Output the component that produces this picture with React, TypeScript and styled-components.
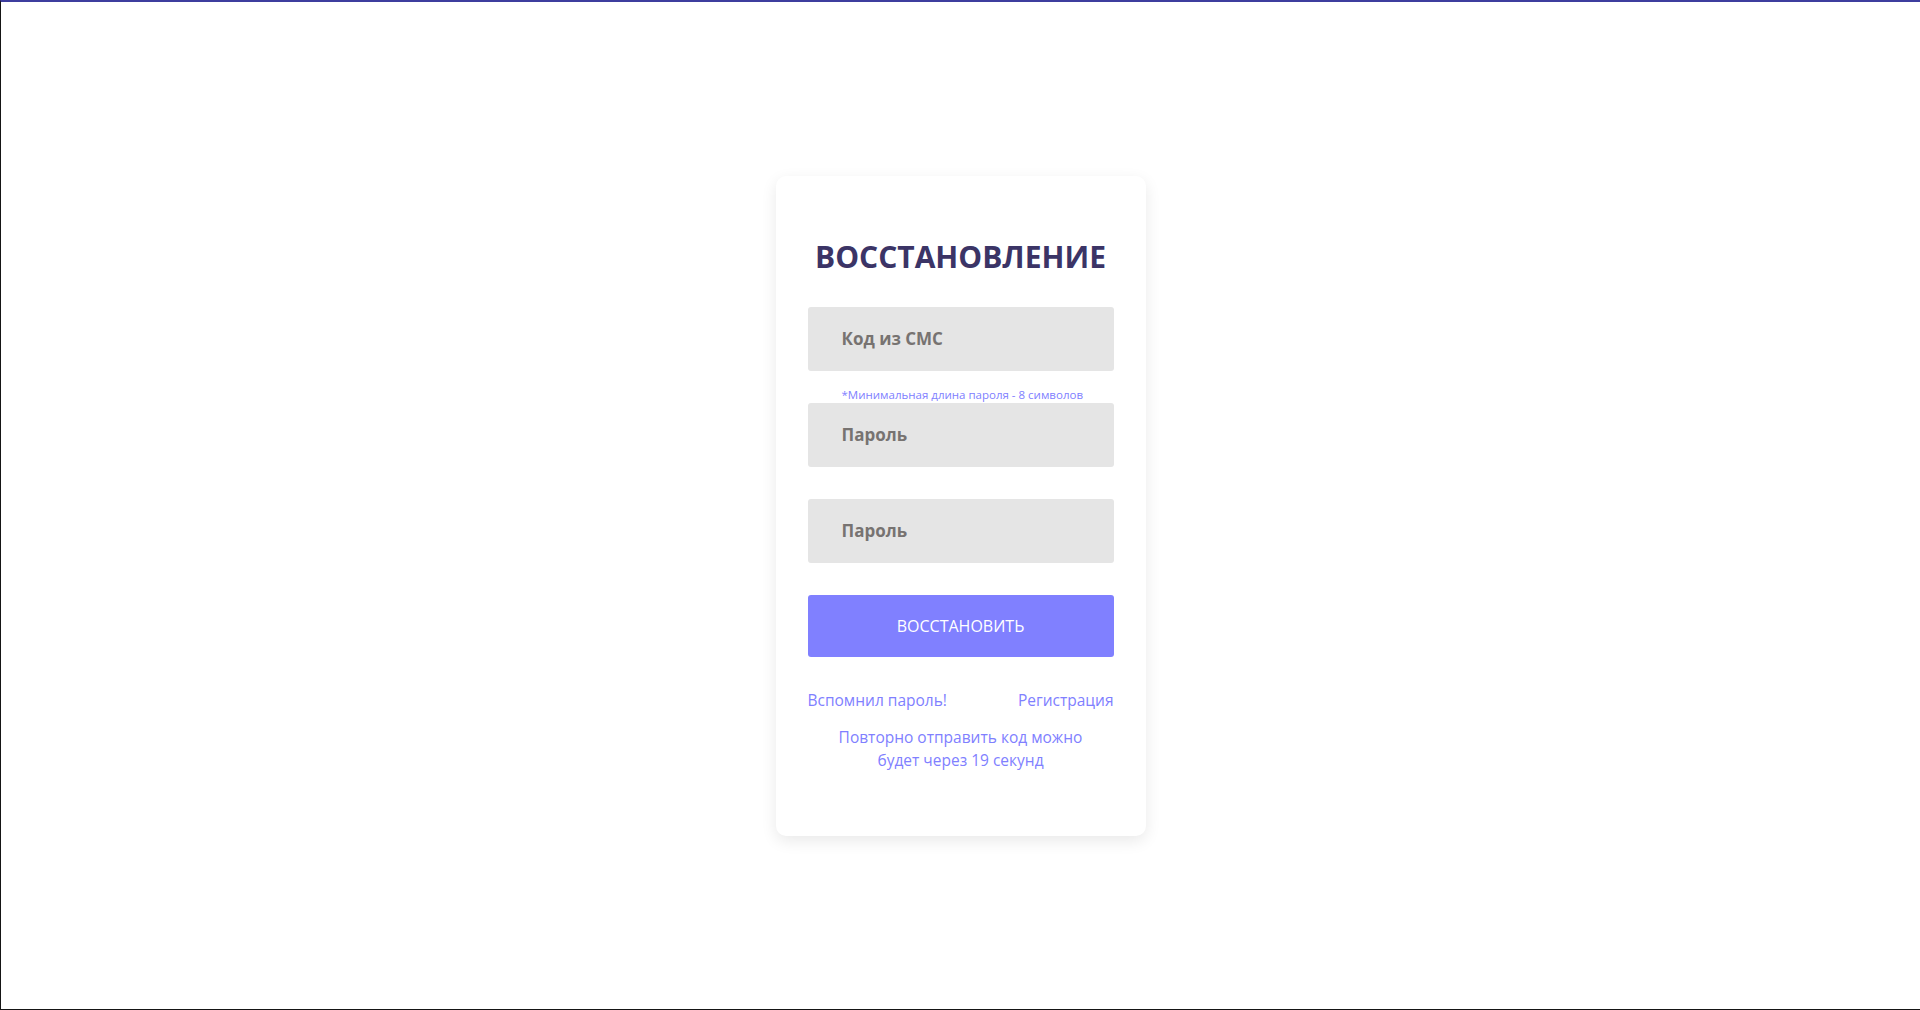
import React from "react";
import styled, { createGlobalStyle } from "styled-components";

const GlobalStyle = createGlobalStyle`
  *, *::before, *::after { box-sizing: border-box; }
  html, body { margin: 0; padding: 0; height: 100%; background: #ffffff; }
  body { font-family: "Open Sans", "Noto Sans", sans-serif; }
  #root { height: 100%; }
`;

const Page = styled.div`
  height: 100vh;
  display: flex;
  align-items: center;
  justify-content: center;
  border-top: 2px solid #3d3d9e;
  border-left: 1px solid #151515;
  border-bottom: 1px solid #151515;
  background: #ffffff;
`;

const Card = styled.div`
  width: 370px;
  padding: 63px 32px 64px;
  background: #ffffff;
  border-radius: 10px;
  box-shadow: 0 5px 16px rgba(0, 0, 0, 0.09);
  display: flex;
  flex-direction: column;
`;

const Title = styled.h1`
  margin: 0 0 32px;
  font-size: 30px;
  line-height: 36px;
  font-weight: 700;
  color: #3b3466;
  text-align: center;
`;

const Field = styled.input<{ $gap?: number }>`
  display: block;
  width: 100%;
  height: 64px;
  margin: ${(p) => p.$gap ?? 32}px 0 0;
  padding: 0 34px;
  border: none;
  border-radius: 3px;
  background: #e5e5e5;
  font-family: inherit;
  font-size: 17px;
  font-weight: 700;
  color: #777371;
  outline: none;
  &::placeholder { color: #777371; opacity: 1; }
`;

const Hint = styled.div`
  margin: 17px 0 1px;
  padding-left: 34px;
  font-size: 11.5px;
  line-height: 14px;
  color: #8080ff;
  white-space: nowrap;
`;

const SubmitButton = styled.button`
  margin-top: 32px;
  height: 62px;
  width: 100%;
  border: none;
  border-radius: 3px;
  background: #8080ff;
  color: #ffffff;
  font-family: inherit;
  font-size: 16px;
  font-weight: 500;
  cursor: pointer;
`;

const LinksRow = styled.div`
  margin-top: 33px;
  display: flex;
  justify-content: space-between;
  font-size: 15.5px;
  line-height: 20px;
`;

const TextLink = styled.a`
  color: #8080ff;
  text-decoration: none;
  cursor: pointer;
`;

const Retry = styled.p`
  margin: 16px 0 0;
  text-align: center;
  font-size: 15.5px;
  line-height: 23px;
  color: #8080ff;
`;

export default function App() {
  return (
    <>
      <GlobalStyle />
      <Page>
        <Card>
          <Title>ВОССТАНОВЛЕНИЕ</Title>
          <Field placeholder="Код из СМС" $gap={0} />
          <Hint>*Минимальная длина пароля - 8 символов</Hint>
          <Field placeholder="Пароль" type="password" $gap={0} />
          <Field placeholder="Пароль" type="password" />
          <SubmitButton>ВОССТАНОВИТЬ</SubmitButton>
          <LinksRow>
            <TextLink>Вспомнил пароль!</TextLink>
            <TextLink>Регистрация</TextLink>
          </LinksRow>
          <Retry>
            Повторно отправить код можно
            <br />
            будет через 19 секунд
          </Retry>
        </Card>
      </Page>
    </>
  );
}
